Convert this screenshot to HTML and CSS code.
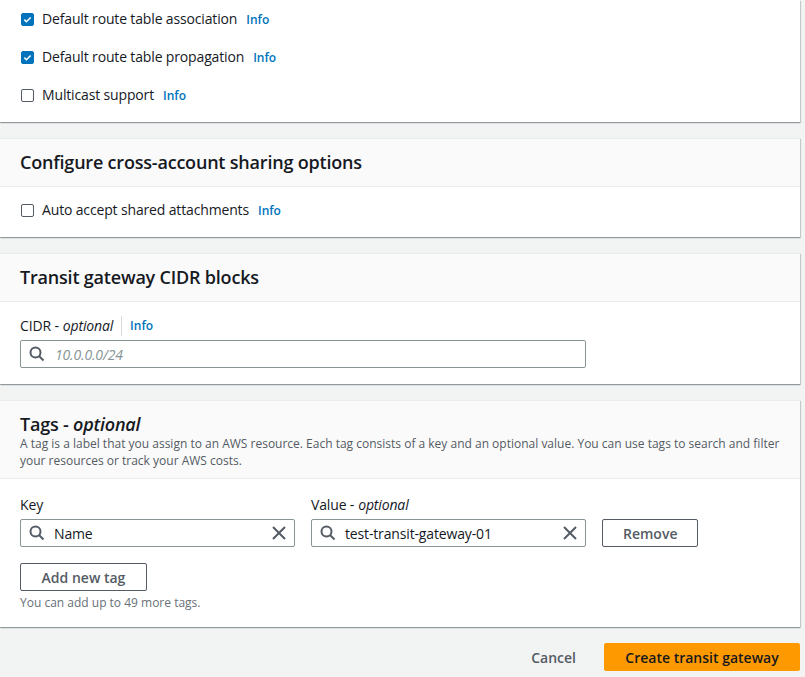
FILE: index.html
```html
<!DOCTYPE html>
<html lang="en">
<head>
<meta charset="utf-8">
<title>Create transit gateway</title>
<link rel="stylesheet" href="styles.css">
</head>
<body>
<main class="page">
  <section class="card">
    <div class="card-body options">
      <label class="check-row"><span class="box checked"><svg viewBox="0 0 14 14" width="13" height="13"><path d="M3 7.2l2.6 2.6L11 4.4" fill="none" stroke="#fff" stroke-width="2"/></svg></span><span class="check-text">Default route table association</span><a class="info">Info</a></label>
      <label class="check-row"><span class="box checked"><svg viewBox="0 0 14 14" width="13" height="13"><path d="M3 7.2l2.6 2.6L11 4.4" fill="none" stroke="#fff" stroke-width="2"/></svg></span><span class="check-text">Default route table propagation</span><a class="info">Info</a></label>
      <label class="check-row"><span class="box"></span><span class="check-text">Multicast support</span><a class="info">Info</a></label>
    </div>
  </section>

  <section class="card">
    <header class="card-header"><h2>Configure cross-account sharing options</h2></header>
    <div class="card-body sharing">
      <label class="check-row"><span class="box"></span><span class="check-text">Auto accept shared attachments</span><a class="info">Info</a></label>
    </div>
  </section>

  <section class="card">
    <header class="card-header"><h2>Transit gateway CIDR blocks</h2></header>
    <div class="card-body cidr">
      <div class="field-label">CIDR - <i>optional</i><span class="divider"></span><a class="info">Info</a></div>
      <div class="input wide">
        <svg class="search" viewBox="0 0 16 16" width="16" height="16"><circle cx="6.5" cy="6.5" r="5" fill="none" stroke="#545b64" stroke-width="2"/><path d="M10 10l4.5 4.5" stroke="#545b64" stroke-width="2"/></svg>
        <span class="placeholder">10.0.0.0/24</span>
      </div>
    </div>
  </section>

  <section class="card">
    <header class="card-header tags-header">
      <h2>Tags - <i>optional</i></h2>
      <p class="desc">A tag is a label that you assign to an AWS resource. Each tag consists of a key and an optional value. You can use tags to search and filter your resources or track your AWS costs.</p>
    </header>
    <div class="card-body tags">
      <div class="tag-grid">
        <div class="field-label">Key</div>
        <div class="field-label">Value - <i>optional</i></div>
        <div></div>
        <div class="input">
          <svg class="search" viewBox="0 0 16 16" width="16" height="16"><circle cx="6.5" cy="6.5" r="5" fill="none" stroke="#545b64" stroke-width="2"/><path d="M10 10l4.5 4.5" stroke="#545b64" stroke-width="2"/></svg>
          <span class="value">Name</span>
          <svg class="clear" viewBox="0 0 14 14" width="14" height="14"><path d="M1 1l12 12M13 1L1 13" stroke="#545b64" stroke-width="2"/></svg>
        </div>
        <div class="input">
          <svg class="search" viewBox="0 0 16 16" width="16" height="16"><circle cx="6.5" cy="6.5" r="5" fill="none" stroke="#545b64" stroke-width="2"/><path d="M10 10l4.5 4.5" stroke="#545b64" stroke-width="2"/></svg>
          <span class="value">test-transit-gateway-01</span>
          <svg class="clear" viewBox="0 0 14 14" width="14" height="14"><path d="M1 1l12 12M13 1L1 13" stroke="#545b64" stroke-width="2"/></svg>
        </div>
        <button class="btn remove">Remove</button>
      </div>
      <button class="btn add">Add new tag</button>
      <p class="hint">You can add up to 49 more tags.</p>
    </div>
  </section>

  <div class="actions">
    <button class="link-btn">Cancel</button>
    <button class="btn primary">Create transit gateway</button>
  </div>
</main>
</body>
</html>
```

FILE: styles.css
```css
* { box-sizing: border-box; }
html, body { margin: 0; padding: 0; }
body {
  background: #f2f3f3;
  font-family: "Open Sans", "Noto Sans", Arial, sans-serif;
  font-size: 14px;
  letter-spacing: -0.15px;
  color: #16191f;
}
.page { width: 800px; }
.card {
  background: #fff;
  border-top: 1px solid #eaeded;
  box-shadow: 0 1px 1px 0 rgba(0,28,36,.3), 1px 1px 1px 0 rgba(0,28,36,.15);
  margin-bottom: 16px;
}
.card:first-child { border-top: none; }
.card-header {
  background: #fafafa;
  border-bottom: 1px solid #eaeded;
  padding: 12px 20px 13px;
}
.card-header h2 {
  margin: 0;
  font-size: 18px;
  line-height: 22px;
  font-weight: 600;
  letter-spacing: -0.2px;
}
.card-header h2 i { font-weight: 600; }
.tags-header { padding-bottom: 9px; }
.desc {
  margin: 0;
  font-size: 12px;
  line-height: 17px;
  letter-spacing: 0;
  color: #545b64;
}
.card-body { padding: 0 20px; }
.options { padding-top: 8px; padding-bottom: 16px; display: flex; flex-direction: column; gap: 16px; }
.sharing { padding-top: 12px; padding-bottom: 16px; }
.check-row { display: flex; align-items: center; height: 22px; }
.box {
  width: 13px; height: 13px;
  margin-left: 1px; margin-right: 8px;
  border: 1px solid #545b64;
  border-radius: 2px;
  display: flex; align-items: center; justify-content: center;
  flex: none;
}
.box.checked { background: #0073bb; border-color: #0073bb; }
.box svg { display: block; }
.check-text { line-height: 22px; }
.info {
  margin-left: 9px;
  font-size: 12px;
  font-weight: 600;
  letter-spacing: 0;
  color: #0073bb;
}
.cidr { padding-top: 13px; padding-bottom: 16px; }
.field-label { display: flex; align-items: center; line-height: 22px; }
.field-label i { margin-left: 4px; }
.divider { width: 1px; height: 20px; background: #d5dbdb; margin: 0 8px; }
.field-label .info { margin-left: 0; }
.cidr .input { margin-top: 3px; }
.input {
  height: 28px;
  border: 1px solid #879596;
  border-radius: 2px;
  display: flex;
  align-items: center;
  padding: 0 8px 0 8px;
  background: #fff;
}
.input.wide { width: 566px; }
.search { flex: none; margin-right: 9px; }
.placeholder { color: #879596; font-style: italic; margin-left: 1px; }
.value { flex: 1; }
.clear { flex: none; }
.tags { padding-top: 15px; padding-bottom: 16px; }
.tag-grid {
  display: grid;
  grid-template-columns: 275px 275px auto;
  column-gap: 16px;
  row-gap: 3px;
  align-items: center;
  justify-items: start;
}
.tag-grid .input { width: 100%; }
.btn {
  font-family: inherit;
  height: 28px;
  border: 1px solid #545b64;
  border-radius: 2px;
  background: #fff;
  color: #545b64;
  font-weight: 600;
  font-size: 14px;
  letter-spacing: 0;
  padding: 0 20px;
  cursor: pointer;
}
.remove { width: 96px; }
.add { margin-top: 16px; width: 127px; padding: 0; }
.hint { margin: 4px 0 0; font-size: 12px; line-height: 16px; letter-spacing: 0; color: #687078; }
.actions {
  display: flex;
  justify-content: flex-end;
  align-items: center;
  gap: 8px;
}
.link-btn {
  font-family: inherit;
  background: none;
  border: none;
  font-size: 14px;
  font-weight: 600;
  letter-spacing: 0;
  color: #545b64;
  padding: 0 20px;
  height: 28px;
}
.primary {
  background: #ff9900;
  border-color: #ff9900;
  color: #16191f;
  width: 196px;
  padding: 0;
}
```
